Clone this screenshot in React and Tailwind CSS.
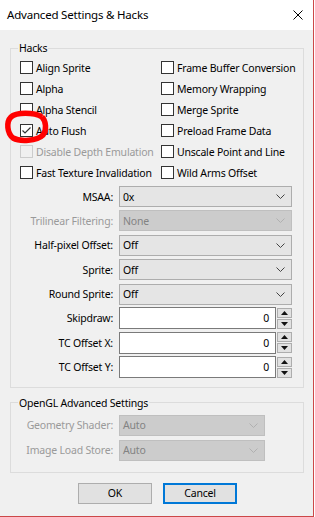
import React from "react";

function Check({ label, checked, disabled }) {
  return (
    <div className="flex items-center h-[21px]">
      <span
        className={
          disabled
            ? "w-[13px] h-[13px] border border-[#cccccc] bg-[#f0f0f0] shrink-0"
            : "w-[13px] h-[13px] border border-[#333333] bg-white shrink-0 flex items-center justify-center"
        }
      >
        {checked && (
          <svg width="11" height="11" viewBox="0 0 11 11">
            <polyline points="1.5,5.5 4,8 9.5,2.5" fill="none" stroke="#333" strokeWidth="1.2" />
          </svg>
        )}
      </span>
      <span className={disabled ? "ml-[3px] text-[#9a9a9a] whitespace-nowrap" : "ml-[3px] whitespace-nowrap"}>{label}</span>
    </div>
  );
}

function Chevron({ disabled }) {
  return (
    <svg width="9" height="5" viewBox="0 0 9 5" className="shrink-0">
      <polyline points="0.5,0.5 4.5,4.5 8.5,0.5" fill="none" stroke={disabled ? "#b0b0b0" : "#444"} strokeWidth="1" />
    </svg>
  );
}

function Label({ text, disabled }) {
  return (
    <span className={disabled ? "w-[102px] text-right text-[#9a9a9a] whitespace-nowrap" : "w-[102px] text-right whitespace-nowrap"}>
      {text}
    </span>
  );
}

function SelectRow({ label, value, disabled, narrow }) {
  return (
    <div className="flex items-center h-[21px] gap-[6px]">
      <Label text={label} disabled={disabled} />
      <div
        className={
          (narrow ? "w-[146px] " : "w-[173px] ") +
          (disabled
            ? "h-[21px] bg-[#cccccc] border border-[#bfbfbf] text-[#838383] flex items-center justify-between pl-[3px] pr-[6px]"
            : "h-[21px] bg-[#e5e5e5] border border-[#adadad] flex items-center justify-between pl-[3px] pr-[6px]")
        }
      >
        <span>{value}</span>
        <Chevron disabled={disabled} />
      </div>
    </div>
  );
}

function SpinRow({ label }) {
  return (
    <div className="flex items-center h-[21px] gap-[6px]">
      <Label text={label} />
      <div className="flex items-center h-[22px]">
        <div className="w-[157px] h-[22px] bg-white border border-[#7a7a7a] flex items-center justify-end pr-[6px]">0</div>
        <div className="flex flex-col ml-[1px] gap-[1px]">
          <div className="w-[15px] h-[10px] bg-[#e1e1e1] border border-[#adadad] flex items-center justify-center">
            <svg width="7" height="4" viewBox="0 0 7 4">
              <polygon points="3.5,0 7,4 0,4" fill="#111" />
            </svg>
          </div>
          <div className="w-[15px] h-[10px] bg-[#e1e1e1] border border-[#adadad] flex items-center justify-center">
            <svg width="7" height="4" viewBox="0 0 7 4">
              <polygon points="0,0 7,0 3.5,4" fill="#111" />
            </svg>
          </div>
        </div>
      </div>
    </div>
  );
}

export default function App() {
  const left = ["Align Sprite", "Alpha", "Alpha Stencil", "Auto Flush", "Disable Depth Emulation", "Fast Texture Invalidation"];
  const right = ["Frame Buffer Conversion", "Memory Wrapping", "Merge Sprite", "Preload Frame Data", "Unscale Point and Line", "Wild Arms Offset"];

  return (
    <div className="relative w-[315px] h-[517px] bg-white text-[10.5px] tracking-[-0.2px] leading-[16px] text-black font-['Noto_Sans',sans-serif]">
      <div className="w-[314px] h-[517px] border-r border-b border-[#cc4848] flex flex-col">
        {/* Title bar */}
        <div className="h-[30px] bg-white flex items-center justify-between pl-[7px] pr-[10px] shrink-0">
          <span className="text-[11.5px] tracking-[-0.2px]">Advanced Settings &amp; Hacks</span>
          <svg width="10" height="10" viewBox="0 0 10 10">
            <path d="M0.5 0.5 L9.5 9.5 M9.5 0.5 L0.5 9.5" stroke="#000" strokeWidth="1" />
          </svg>
        </div>

        <div className="flex-1 bg-[#f0f0f0] pl-[10px] pt-[10px] flex flex-col">
          <fieldset className="w-[294px] border border-[#dcdcdc] pb-[9px]">
            <legend className="ml-[7px] px-[1px]">Hacks</legend>
            <div className="grid grid-cols-[141px_1fr] pl-[9px] pt-[1px]">
              <div className="flex flex-col">
                {left.map((l) => (
                  <Check key={l} label={l} checked={l === "Auto Flush"} disabled={l === "Disable Depth Emulation"} />
                ))}
              </div>
              <div className="flex flex-col">
                {right.map((l) => (
                  <Check key={l} label={l} />
                ))}
              </div>
            </div>
            <div className="flex flex-col gap-[3.4px] mt-[3px]">
              <SelectRow label="MSAA:" value="0x" />
              <SelectRow label="Trilinear Filtering:" value="None" disabled />
              <SelectRow label="Half-pixel Offset:" value="Off" />
              <SelectRow label="Sprite:" value="Off" />
              <SelectRow label="Round Sprite:" value="Off" />
              <SpinRow label="Skipdraw:" />
              <SpinRow label="TC Offset X:" />
              <SpinRow label="TC Offset Y:" />
            </div>
          </fieldset>

          <fieldset className="w-[294px] border border-[#dcdcdc] mt-[7px] pt-[4px] pb-[11px]">
            <legend className="ml-[7px] px-[1px]">OpenGL Advanced Settings</legend>
            <div className="flex flex-col gap-[4px]">
              <SelectRow label="Geometry Shader:" value="Auto" disabled narrow />
              <SelectRow label="Image Load Store:" value="Auto" disabled narrow />
            </div>
          </fieldset>

          <div className="flex gap-[11px] mt-[10px] ml-[68px]">
            <button className="w-[74px] h-[21px] bg-[#e1e1e1] border border-[#adadad]">OK</button>
            <button className="w-[74px] h-[21px] bg-[#e1e1e1] border-2 border-[#0078d7]">Cancel</button>
          </div>
        </div>
      </div>

      {/* red annotation mark */}
      <svg className="absolute left-0 top-0 pointer-events-none" width="60" height="160" viewBox="0 0 60 160">
        <path
          d="M42 117 C34 112 16 112 11 117 C6 122 7 133 13 138 C20 142 37 141 43 135 C47 130 46 121 42 117"
          fill="none"
          stroke="#ff0000"
          strokeWidth="5.5"
        />
      </svg>
    </div>
  );
}
